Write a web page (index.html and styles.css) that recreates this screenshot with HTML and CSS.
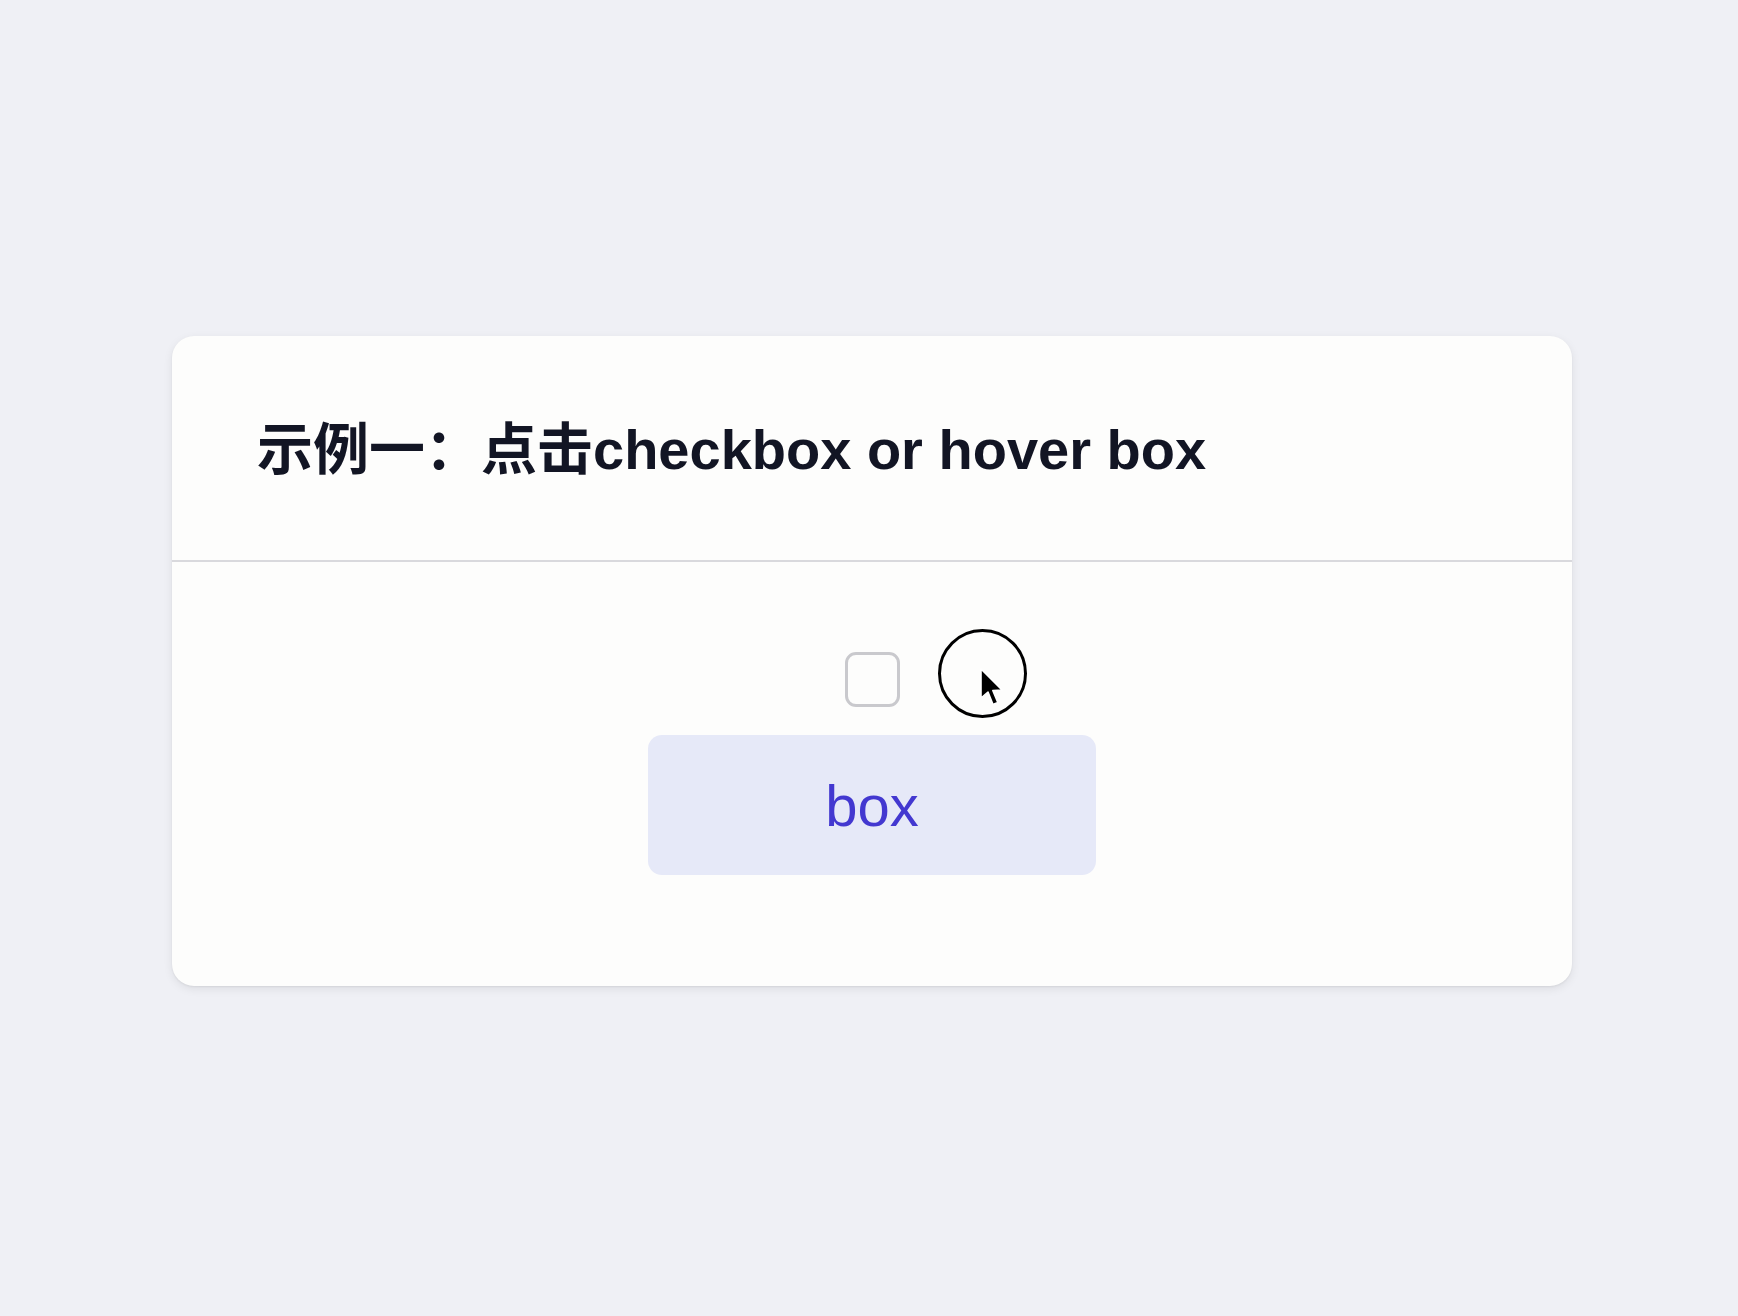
FILE: index.html
```html
<!DOCTYPE html>
<html lang="zh">
<head>
<meta charset="utf-8">
<title>示例一</title>
<link rel="stylesheet" href="styles.css">
</head>
<body>
<main class="page">
  <section class="card">
    <header class="card-header">
      <h1 class="title">示例一：点击checkbox or hover box</h1>
    </header>
    <div class="card-body">
      <div class="check-row">
        <span class="checkbox"></span>
        <span class="cursor-ring">
          <svg class="cursor" width="28" height="42" viewBox="0 0 28 42">
            <path d="M2 2 L2 31 L9 25 L14 37.5 L18.8 35.5 L13.8 23.5 L23 23 Z" fill="#000" stroke="#fff" stroke-width="1.6" stroke-linejoin="round"/>
          </svg>
        </span>
      </div>
      <div class="box">box</div>
    </div>
  </section>
</main>
</body>
</html>
```
FILE: styles.css
```css
html, body {
  margin: 0;
  padding: 0;
}
body {
  background: #eff0f5;
  font-family: "Liberation Sans", Arial, "Noto Sans CJK SC", sans-serif;
  width: 1738px;
  height: 1316px;
  overflow: hidden;
}
.page {
  padding: 336px 0 0 172px;
}
.card {
  width: 1400px;
  background: #fdfdfc;
  border-radius: 22px;
  box-shadow: 0 3px 10px rgba(0, 0, 0, 0.08), 0 1px 2px rgba(0, 0, 0, 0.06);
  overflow: hidden;
}
.card-header {
  height: 226px;
  box-sizing: border-box;
  border-bottom: 2px solid #d9d9dd;
  display: flex;
  align-items: center;
  padding: 3px 85px 0;
}
.title {
  margin: 0;
  font-size: 56px;
  font-weight: 700;
  line-height: 64px;
  color: #121524;
  font-family: "Liberation Sans", Arial, "Noto Sans CJK SC", sans-serif;
}
.card-body {
  display: flex;
  flex-direction: column;
  align-items: center;
  padding: 90px 0 111px;
  gap: 28px;
}
.check-row {
  position: relative;
  display: flex;
  justify-content: center;
  width: 55px;
  height: 55px;
}
.checkbox {
  width: 55px;
  height: 55px;
  box-sizing: border-box;
  border: 3px solid #c9c9cd;
  border-radius: 11px;
  background: #fdfdfc;
}
.cursor-ring {
  position: absolute;
  left: 93px;
  top: -23px;
  width: 89px;
  height: 89px;
  box-sizing: border-box;
  border: 3.5px solid #000;
  border-radius: 50%;
}
.cursor {
  position: absolute;
  left: 38px;
  top: 35px;
}
.box {
  width: 448px;
  height: 140px;
  background: #e6e9f8;
  border-radius: 14px;
  display: flex;
  align-items: center;
  justify-content: center;
  font-size: 58px;
  color: #4338d0;
}
```
